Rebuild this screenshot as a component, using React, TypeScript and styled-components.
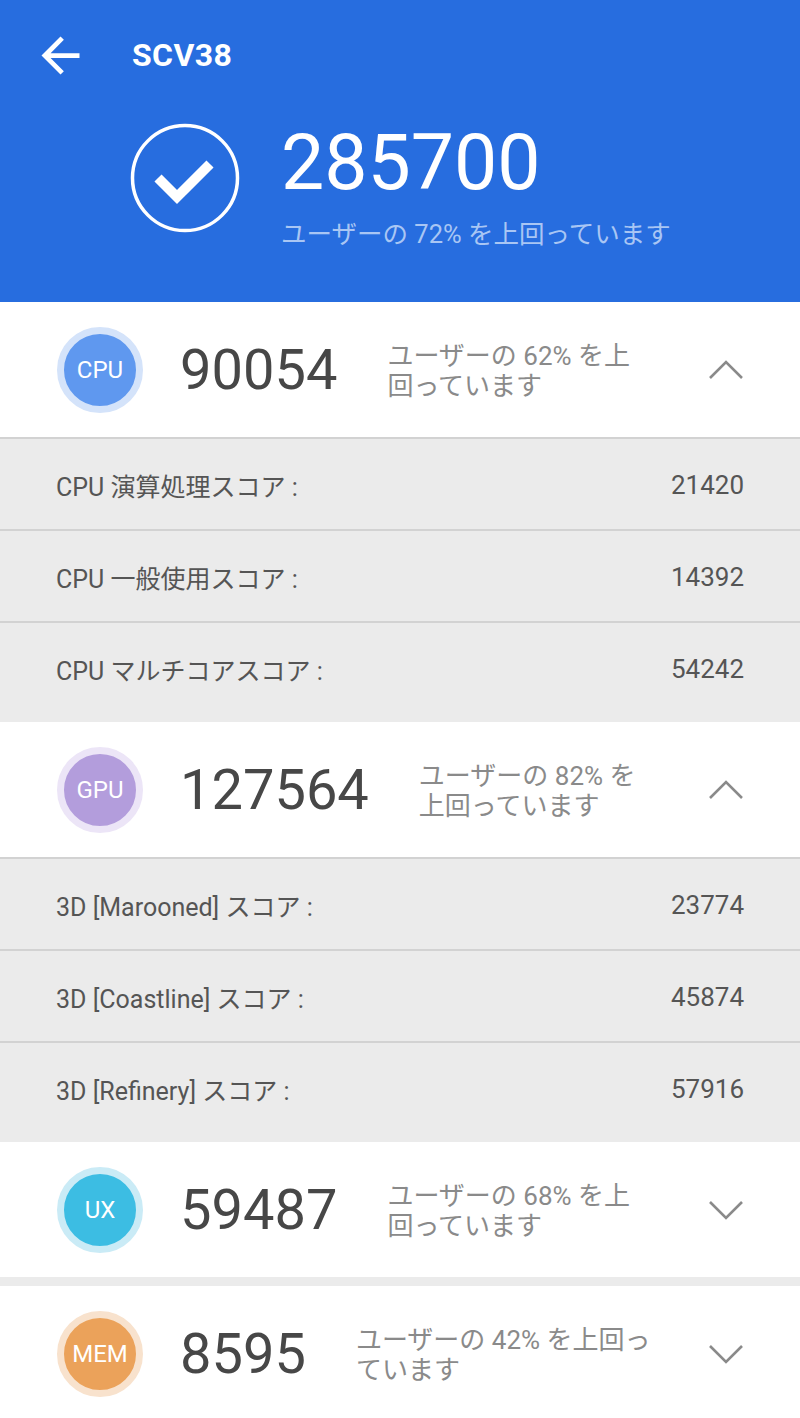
import styled, { createGlobalStyle } from "styled-components"

const GlobalStyle = createGlobalStyle`
  html, body {
    margin: 0;
    padding: 0;
    background: #ebebeb;
  }
  body {
    font-family: Roboto, "Noto Sans CJK JP", sans-serif;
  }
`

type Detail = { label: string; value: string }

type Category = {
  key: string
  score: string
  percent: string
  inner: string
  ring: string
  open: boolean
  details: Detail[]
}

const categories: Category[] = [
  {
    key: "CPU",
    score: "90054",
    percent: "62%",
    inner: "#5f98ef",
    ring: "#d4e3fa",
    open: true,
    details: [
      { label: "CPU 演算処理スコア :", value: "21420" },
      { label: "CPU 一般使用スコア :", value: "14392" },
      { label: "CPU マルチコアスコア :", value: "54242" },
    ],
  },
  {
    key: "GPU",
    score: "127564",
    percent: "82%",
    inner: "#b39ddc",
    ring: "#ece5f7",
    open: true,
    details: [
      { label: "3D [Marooned] スコア :", value: "23774" },
      { label: "3D [Coastline] スコア :", value: "45874" },
      { label: "3D [Refinery] スコア :", value: "57916" },
    ],
  },
  {
    key: "UX",
    score: "59487",
    percent: "68%",
    inner: "#3cbde3",
    ring: "#caebf6",
    open: false,
    details: [],
  },
  {
    key: "MEM",
    score: "8595",
    percent: "42%",
    inner: "#eba25a",
    ring: "#f8e2cd",
    open: false,
    details: [],
  },
]

export default function App() {
  return (
    <>
      <GlobalStyle />
      <Page>
        <Header>
          <TopBar>
            <BackButton aria-label="back">
              <svg width="57" height="57" viewBox="0 0 24 24" fill="#fff">
                <path d="M20 11H7.83l5.59-5.59L12 4l-8 8 8 8 1.41-1.41L7.83 13H20v-2z" />
              </svg>
            </BackButton>
            <Title>SCV38</Title>
          </TopBar>
          <Hero>
            <svg width="110" height="110" viewBox="0 0 110 110">
              <circle cx="55" cy="55" r="52.5" fill="none" stroke="#fff" strokeWidth="3.5" />
              <polyline
                points="28,55 47,74 80,41"
                fill="none"
                stroke="#fff"
                strokeWidth="10"
                strokeLinejoin="miter"
              />
            </svg>
            <TotalBlock>
              <TotalScore>285700</TotalScore>
              <TotalNote>ユーザーの 72% を上回っています</TotalNote>
            </TotalBlock>
          </Hero>
        </Header>

        {categories.map((c) => (
          <Section key={c.key}>
            <Head>
              <Badge $inner={c.inner} $ring={c.ring}>{c.key}</Badge>
              <Score>{c.score}</Score>
              <Note>ユーザーの {c.percent} を上回っています</Note>
              <Chevron width="36" height="20" viewBox="0 0 36 20">
                <polyline
                  points={c.open ? "2,18 18,2 34,18" : "2,2 18,18 34,2"}
                  fill="none"
                  stroke="#8a8a8a"
                  strokeWidth="2.6"
                />
              </Chevron>
            </Head>
            {c.open && (
              <Details>
                {c.details.map((d) => (
                  <Row key={d.label}>
                    <RowLabel>{d.label}</RowLabel>
                    <RowValue>{d.value}</RowValue>
                  </Row>
                ))}
              </Details>
            )}
          </Section>
        ))}
      </Page>
    </>
  )
}

const Page = styled.div`
  width: 800px;
  min-height: 1418px;
  background: #ebebeb;
  overflow: hidden;
`

const Header = styled.header`
  height: 302px;
  background: #276ddf;
  color: #fff;
`

const TopBar = styled.div`
  height: 110px;
  display: flex;
  align-items: center;
  padding-left: 32px;
`

const BackButton = styled.div`
  width: 57px;
  height: 57px;
  display: flex;
`

const Title = styled.h1`
  margin: 0 0 0 43px;
  font-size: 32px;
  font-weight: 700;
  letter-spacing: 0.4px;
`

const Hero = styled.div`
  display: flex;
  align-items: flex-start;
  padding: 13px 0 0 130px;
`

const TotalBlock = styled.div`
  margin: 2px 0 0 41px;
  display: flex;
  flex-direction: column;
`

const TotalScore = styled.div`
  font-size: 77px;
  line-height: 77px;
  font-weight: 400;
`

const TotalNote = styled.div`
  margin-top: 17px;
  font-size: 25.5px;
  line-height: 30px;
  color: #a9c6f4;
`

const Section = styled.section`
  margin-bottom: 9px;
`

const Head = styled.div`
  height: 135px;
  background: #fff;
  display: flex;
  align-items: center;
  padding: 0 56px 0 57px;
`

const Badge = styled.div<{ $inner: string; $ring: string }>`
  flex: none;
  width: 86px;
  height: 86px;
  box-sizing: border-box;
  border-radius: 50%;
  border: 7px solid ${(p) => p.$ring};
  background: ${(p) => p.$inner};
  color: #fff;
  font-size: 24px;
  display: flex;
  align-items: center;
  justify-content: center;
`

const Score = styled.div`
  flex: none;
  margin-left: 37px;
  font-size: 56px;
  color: #474747;
  line-height: 1;
`

const Note = styled.div`
  flex: 1;
  margin: 3px 54px 0 50px;
  font-size: 26px;
  line-height: 30px;
  color: #8a8a8a;
`

const Chevron = styled.svg`
  flex: none;
  margin-left: auto;
`

const Details = styled.div`
  background: #ebebeb;
`

const Row = styled.div`
  border-top: 2px solid #d2d2d2;
  display: flex;
  align-items: center;
  justify-content: space-between;
  padding: 2px 56px 0;
  box-sizing: border-box;
  height: 92px;
  font-size: 25px;
  color: #555;
`

const RowLabel = styled.span``

const RowValue = styled.span`
  font-size: 26px;
`
